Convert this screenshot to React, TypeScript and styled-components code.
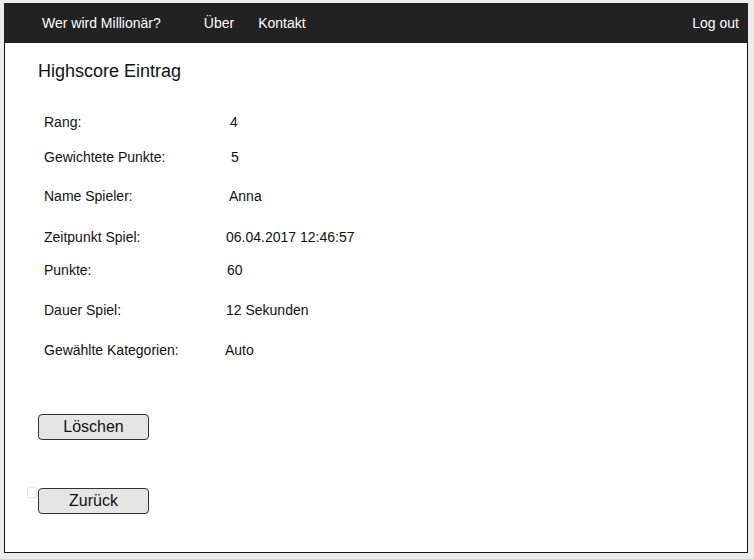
import React from "react";
import styled, { createGlobalStyle } from "styled-components";

const Global = createGlobalStyle`
  html, body { margin: 0; padding: 0; background: #ececec; }
  body { font-family: "Liberation Sans", Arial, sans-serif; color: #111; }
`;

const Page = styled.div`
  padding: 3px 6px 6px 4px;
`;

const Frame = styled.div`
  width: 744px;
  height: 550px;
  display: flex;
  flex-direction: column;
  box-sizing: border-box;
`;

const NavBar = styled.nav`
  height: 40px;
  background: #222222;
  display: flex;
  align-items: center;
  padding: 0 9px 0 38px;
  box-sizing: border-box;
  flex-shrink: 0;
`;

const NavItem = styled.a<{ $gap?: number }>`
  color: #ffffff;
  font-size: 14px;
  line-height: 38px;
  text-decoration: none;
  margin-right: ${(p) => p.$gap ?? 0}px;
  white-space: nowrap;
`;

const NavSpacer = styled.div`
  flex: 1;
`;

const Body = styled.main`
  flex: 1;
  background: #ffffff;
  border: 1px solid #111;
  border-top: none;
  padding: 16px 0 0 33px;
  box-sizing: border-box;
  display: flex;
  flex-direction: column;
`;

const Title = styled.h1`
  margin: 0 0 29px;
  font-size: 18px;
  font-weight: normal;
  line-height: 24px;
  color: #111;
`;

const Row = styled.div<{ $top: number; $labelWidth: number }>`
  display: grid;
  grid-template-columns: ${(p) => p.$labelWidth}px auto;
  margin-top: ${(p) => p.$top}px;
  padding-left: 6px;
  font-size: 14px;
  line-height: 20px;
  color: #111;
`;

const Label = styled.span``;
const Value = styled.span``;

const ButtonRow = styled.div<{ $top: number }>`
  display: flex;
  align-items: flex-start;
  margin-top: ${(p) => p.$top}px;
  margin-left: -11px;
  gap: 1px;
`;

const Ghost = styled.span<{ $visible?: boolean }>`
  width: 8px;
  height: 9px;
  margin-top: -1px;
  border: 1px solid ${(p) => (p.$visible ? "#e2e2e2" : "transparent")};
  border-radius: 2px;
  background: transparent;
  flex-shrink: 0;
`;

const Button = styled.button`
  width: 111px;
  height: 26px;
  box-sizing: border-box;
  background: #e5e5e5;
  border: 1px solid #333;
  border-radius: 4px;
  font-family: "Liberation Sans", Arial, sans-serif;
  font-size: 16px;
  color: #111;
  padding: 0;
  line-height: 22px;
  cursor: pointer;
`;

const rows = [
  { label: "Rang:", value: "4", top: 0, x: 230 },
  { label: "Gewichtete Punkte:", value: "5", top: 15, x: 231 },
  { label: "Name Spieler:", value: "Anna", top: 19, x: 229 },
  { label: "Zeitpunkt Spiel:", value: "06.04.2017 12:46:57", top: 21, x: 226 },
  { label: "Punkte:", value: "60", top: 13, x: 227 },
  { label: "Dauer Spiel:", value: "12 Sekunden", top: 20, x: 226 },
  { label: "Gewählte Kategorien:", value: "Auto", top: 20, x: 225 },
];

export default function App() {
  return (
    <Page>
      <Global />
      <Frame>
        <NavBar>
          <NavItem href="#" $gap={43}>Wer wird Millionär?</NavItem>
          <NavItem href="#" $gap={24}>Über</NavItem>
          <NavItem href="#">Kontakt</NavItem>
          <NavSpacer />
          <NavItem href="#">Log out</NavItem>
        </NavBar>
        <Body>
          <Title>Highscore Eintrag</Title>
          {rows.map((r) => (
            <Row key={r.label} $top={r.top} $labelWidth={r.x - 44}>
              <Label>{r.label}</Label>
              <Value>{r.value}</Value>
            </Row>
          ))}
          <ButtonRow $top={54}>
            <Ghost />
            <Button>Löschen</Button>
          </ButtonRow>
          <ButtonRow $top={48}>
            <Ghost $visible />
            <Button>Zurück</Button>
          </ButtonRow>
        </Body>
      </Frame>
    </Page>
  );
}
